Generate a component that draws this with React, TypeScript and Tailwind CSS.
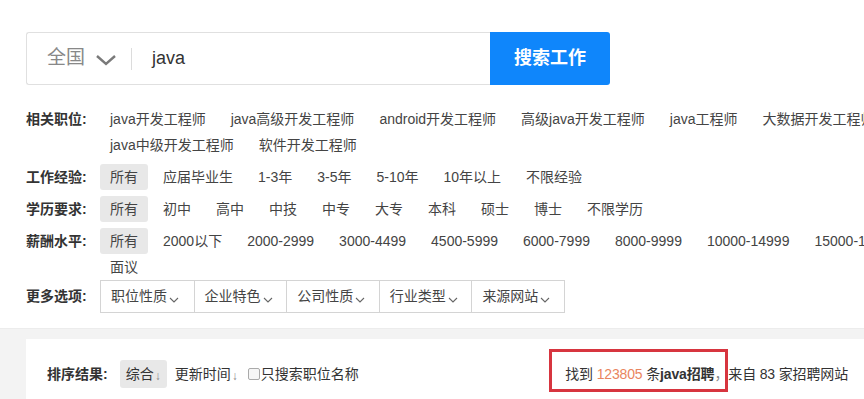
import React from "react";

const FONT = '"Liberation Sans", "Noto Sans CJK SC", sans-serif';

function Row({ label, items, chip = false, className = "" }: { label: string; items: string[]; chip?: boolean; className?: string }) {
  return (
    <div className={`flex pl-[26px] ${className}`}>
      <div className="w-[74px] shrink-0 h-[26px] leading-[26px] text-[14px] font-bold text-[#333]">{label}</div>
      <div className="w-[820px] shrink-0 flex flex-wrap gap-x-[5px]">
        {chip && (
          <span className="h-[26px] leading-[26px] px-[10px] rounded-[3px] bg-[#e8e8e8] text-[14px] text-[#444]">所有</span>
        )}
        {items.map((t) => (
          <span key={t} className="h-[26px] leading-[26px] px-[10px] text-[14px] text-[#444] whitespace-nowrap">{t}</span>
        ))}
      </div>
    </div>
  );
}

function SmallChevron() {
  return (
    <svg width="10" height="6" viewBox="0 0 10 6" className="ml-[2px] mt-[7px]">
      <path d="M1 1 L5 5 L9 1" fill="none" stroke="#666" strokeWidth="1.1" />
    </svg>
  );
}

export default function App() {
  return (
    <div className="w-[864px] h-[399px] overflow-hidden bg-white" style={{ fontFamily: FONT }}>
      <div className="w-[1000px]">
        {/* Search bar */}
        <div className="pt-[32px] pl-[26px] flex">
          <div className="w-[464px] h-[53px] border border-[#e0e0e0] border-r-0 rounded-l-[3px] flex items-center">
            <span className="pl-[20px] text-[19px] text-[#888]">全国</span>
            <svg width="22" height="12" viewBox="0 0 22 12" className="ml-[10px] mt-[2px]">
              <path d="M2 2 L11 10 L20 2" fill="none" stroke="#7a7a7a" strokeWidth="2.4" />
            </svg>
            <div className="ml-[14px] w-px h-[22px] bg-[#dcdcdc]" />
            <span className="ml-[20px] text-[18px] text-[#333]">java</span>
          </div>
          <div className="w-[120px] h-[53px] bg-[#0f86fb] rounded-r-[3px] flex items-center justify-center text-white text-[18px] font-bold">
            搜索工作
          </div>
        </div>

        {/* Filters */}
        <div className="mt-[21px]">
          <Row
            label="相关职位:"
            items={[
              "java开发工程师",
              "java高级开发工程师",
              "android开发工程师",
              "高级java开发工程师",
              "java工程师",
              "大数据开发工程师",
              "java中级开发工程师",
              "软件开发工程师",
            ]}
          />
          <Row className="mt-[6px]" label="工作经验:" chip items={["应届毕业生", "1-3年", "3-5年", "5-10年", "10年以上", "不限经验"]} />
          <Row className="mt-[6px]" label="学历要求:" chip items={["初中", "高中", "中技", "中专", "大专", "本科", "硕士", "博士", "不限学历"]} />
          <Row
            className="mt-[6px]"
            label="薪酬水平:"
            chip
            items={["2000以下", "2000-2999", "3000-4499", "4500-5999", "6000-7999", "8000-9999", "10000-14999", "15000-19999", "面议"]}
          />
          <div className="flex pl-[26px] items-center">
            <div className="w-[74px] shrink-0 text-[14px] font-bold text-[#333]">更多选项:</div>
            <div className="flex border border-[#d4d4d4] h-[33px]">
              {["职位性质", "企业特色", "公司性质", "行业类型", "来源网站"].map((t, i) => (
                <div
                  key={t}
                  className={`w-[92.6px] h-full flex items-center pl-[10px] text-[14px] text-[#444] ${i > 0 ? "border-l border-[#d4d4d4]" : ""}`}
                >
                  <span>{t}</span>
                  <SmallChevron />
                </div>
              ))}
            </div>
          </div>
        </div>

        {/* Results section */}
        <div className="mt-[15px] bg-[#f3f3f3] pt-[10px] pl-[26px] border-t border-[#ececec]">
          <div className="w-[838px] h-[80px] bg-white pt-[21px] pl-[21px] pr-[16px] flex items-start">
            <div className="flex items-center h-[28px]">
              <span className="text-[14px] font-bold text-[#333]">排序结果:</span>
              <span className="ml-[12px] h-[28px] px-[6px] rounded-[3px] bg-[#e8e8e8] flex items-center text-[14px] text-[#333]">
                综合<span className="text-[12px] text-[#888] ml-[1px] mt-[3px]">↓</span>
              </span>
              <span className="ml-[8px] flex items-center text-[14px] text-[#333]">
                更新时间<span className="text-[12px] text-[#888] ml-[1px] mt-[3px]">↓</span>
              </span>
              <span className="ml-[10px] w-[12px] h-[12px] border border-[#aaa] rounded-[2px] bg-[#f6f6f6]" />
              <span className="ml-[1px] text-[14px] text-[#333]">只搜索职位名称</span>
            </div>
            <div className="ml-auto h-[28px] flex items-center relative text-[14px] tracking-[-0.15px] text-[#333] whitespace-nowrap">
              <span>找到</span>
              <span className="text-[#e98560]">&nbsp;123805&nbsp;</span>
              <span>条</span>
              <span className="font-bold">java招聘</span>
              <span className="text-[#888]">，</span>
              <span>来自 83 家招聘网站</span>
              <div className="absolute left-[-16px] top-[-11px] w-[179px] h-[43px] border-[3px] border-[#d7353f]" />
            </div>
          </div>
        </div>
      </div>
    </div>
  );
}
